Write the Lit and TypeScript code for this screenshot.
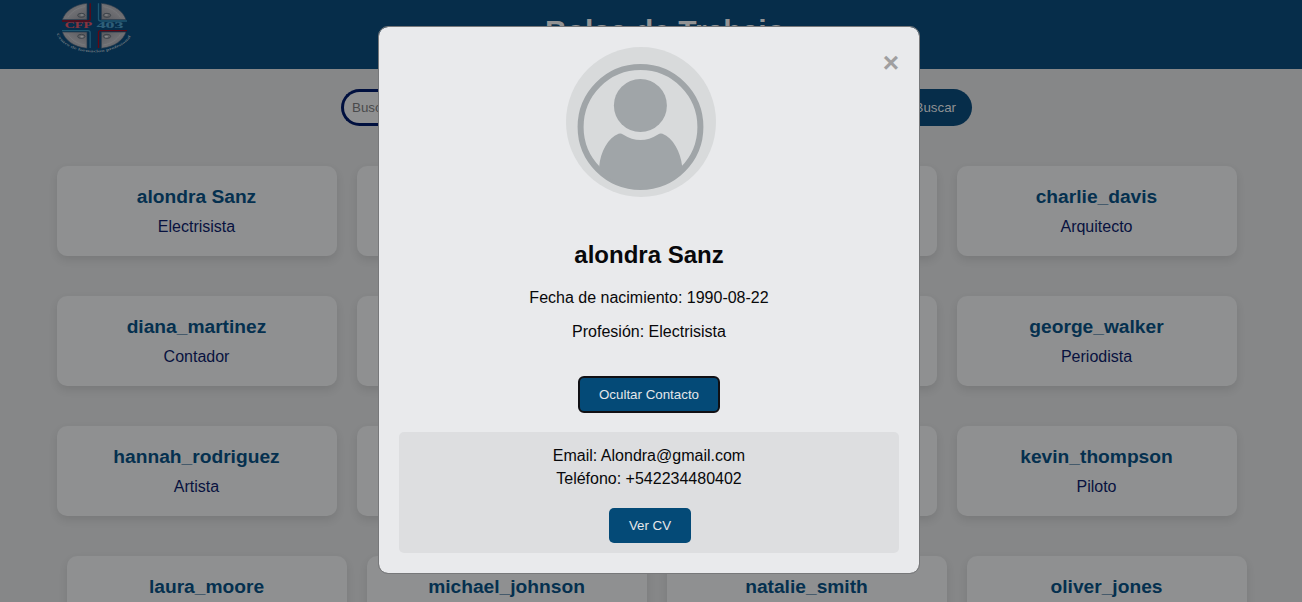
import { LitElement, html, svg, css } from "lit";
import { customElement, property } from "lit/decorators.js";

type Person = { name: string; job: string };

const shifted: Person[] = [
  { name: "alondra Sanz", job: "Electrisista" },
  { name: "", job: "" },
  { name: "", job: "" },
  { name: "charlie_davis", job: "Arquitecto" },
  { name: "diana_martinez", job: "Contador" },
  { name: "", job: "" },
  { name: "", job: "" },
  { name: "george_walker", job: "Periodista" },
  { name: "hannah_rodriguez", job: "Artista" },
  { name: "", job: "" },
  { name: "", job: "" },
  { name: "kevin_thompson", job: "Piloto" },
];

const rest: Person[] = [
  { name: "laura_moore", job: "" },
  { name: "michael_johnson", job: "" },
  { name: "natalie_smith", job: "" },
  { name: "oliver_jones", job: "" },
];

@customElement("school-logo")
export class SchoolLogo extends LitElement {
  static styles = css`
    :host { display: block; width: 78px; height: 54px; }
    svg { display: block; }
    .word { font: bold 23px "Liberation Serif", serif; stroke-width: 0.4; }
    .motto { font: bold 11px "Liberation Serif", serif; fill: #66737c; }
  `;
  render() {
    const wing = (t: string) => svg`
      <g transform=${t}>
        <path d="M-95 -19 C-87 -43 -62 -64 -21 -68 V-19 Z" fill="url(#metal)" stroke="#26384a" stroke-width="2"/>
        <path d="M-78 -26 C-67 -44 -50 -54 -27 -58" fill="none" stroke="#77787b" stroke-width="3"/>
        <ellipse cx="-38" cy="-32" rx="11" ry="6" fill="#5f6064" stroke="#3d444b" stroke-width="3"/>
        <ellipse cx="-36" cy="-33" rx="5" ry="2.5" fill="#868789"/>
      </g>`;
    return html`<svg width="78" height="54" viewBox="45 0 234 162">
      <defs>
        <linearGradient id="metal" x1="0" y1="0" x2="1" y2="1">
          <stop offset="0" stop-color="#5a5c60"/><stop offset=".5" stop-color="#6f6f73"/><stop offset="1" stop-color="#58595e"/>
        </linearGradient>
        <path id="arc" d="M50 101 C76 176 250 176 277 98"/>
      </defs>
      ${wing("translate(162 78)")}
      ${wing("translate(163 78) scale(-1 1)")}
      ${wing("translate(162 77) scale(1 -1)")}
      ${wing("translate(163 77) scale(-1 -1)")}
      <g fill="none" stroke-width="4">
        <path d="M150.5 10 V57 Q150.5 63 144 63 H66" stroke="#620713"/>
        <path d="M175.5 10 V57 Q175.5 63 182 63 H261" stroke="#1f5670"/>
        <path d="M66 92 H144 Q150.5 92 150.5 98 V144" stroke="#1f5670"/>
        <path d="M261 92 H182 Q175.5 92 175.5 98 V144" stroke="#620713"/>
      </g>
      <text class="word" x="74" y="85" textLength="82" lengthAdjust="spacingAndGlyphs" fill="#8a343e" stroke="#8a343e">CFP</text>
      <text class="word" x="170" y="85" textLength="80" lengthAdjust="spacingAndGlyphs" fill="#2f5f79" stroke="#2f5f79">403</text>
      <text class="motto"><textPath href="#arc" textLength="258" lengthAdjust="spacingAndGlyphs">Centro de formacion profesional</textPath></text>
    </svg>`;
  }
}

@customElement("person-card")
export class PersonCard extends LitElement {
  @property() name = "";
  @property() job = "";
  static styles = css`
    :host {
      display: block; box-sizing: border-box; width: 280px; height: 90px; padding: 20px;
      border-radius: 10px; background: #8f9091; text-align: center;
      box-shadow: 0 4px 8px rgba(0, 0, 0, 0.1);
    }
    .name { margin: 0; font-size: 19.2px; line-height: 22px; height: 22px; font-weight: bold; color: #05304f; }
    .job { margin: 10px 0 0; font-size: 16px; line-height: 18px; color: #08123f; }
  `;
  render() {
    return html`<h3 class="name">${this.name}</h3><p class="job">${this.job}</p>`;
  }
}

@customElement("contact-modal")
export class ContactModal extends LitElement {
  static styles = css`
    :host {
      position: absolute; inset: 0; display: flex; justify-content: center;
      align-items: flex-start; padding: 26px 4px 0 0; z-index: 2;
    }
    .dialog {
      box-sizing: border-box; width: 542px; height: 548px; padding: 20px;
      border: 1px solid #77787a; border-radius: 10px; background: #e9eaec;
      background-clip: padding-box; text-align: center; color: #08080a; font-size: 16px;
    }
    .top { display: flex; height: 150px; }
    .picture { flex: 1; display: flex; justify-content: center; }
    .close { font-size: 28px; line-height: 32px; font-weight: bold; color: #a09fa0; }
    h2 { margin: 44px 0 0; font-size: 24px; line-height: 28px; }
    .line { margin: 0; line-height: 18px; }
    .birth { margin-top: 20px; }
    .work { margin-top: 16px; }
    button {
      display: block; margin: 0 auto; height: 35px; padding: 0 20px; border: 0; border-radius: 5px;
      background: #044a77; color: #e4e7ea; font: 13.333px "Liberation Sans", Arial, sans-serif;
    }
    .toggle { margin-top: 36px; outline: 2px solid #101014; outline-offset: -1px; }
    .contact {
      box-sizing: border-box; height: 121px; margin-top: 20px; padding: 12px 10px 10px;
      border-radius: 5px; background: #dddee0; line-height: 23px;
    }
    .contact p { margin: 0; }
    .actions { padding: 18px 0 0 2px; }
    .actions button { width: 82px; padding: 0; }
  `;
  render() {
    return html`<section class="dialog" role="dialog">
      <div class="top">
        <div class="picture">
          <svg width="150" height="150" viewBox="0 0 150 150">
            <circle cx="75" cy="75" r="75" fill="#d8dadb"/>
            <circle cx="74.5" cy="80" r="59.9" fill="none" stroke="#a0a5a8" stroke-width="6"/>
            <circle cx="74.4" cy="58.5" r="26.5" fill="#a0a5a8"/>
            <path fill="#a0a5a8" d="M33.2 119.5 C34.5 105 42 91 52.5 86.8 Q54.8 85.8 57 87.4 Q74.5 98.5 92 87.4 Q94.2 85.8 96.5 86.8 C107 91 114.6 105 116.2 119.5 C105 146 44 146 33.2 119.5Z"/>
          </svg>
        </div>
        <span class="close">×</span>
      </div>
      <h2>alondra Sanz</h2>
      <p class="line birth">Fecha de nacimiento: 1990-08-22</p>
      <p class="line work">Profesión: Electrisista</p>
      <button class="toggle">Ocultar Contacto</button>
      <div class="contact">
        <p>Email: Alondra@gmail.com</p>
        <p>Teléfono: +542234480402</p>
        <div class="actions"><button>Ver CV</button></div>
      </div>
    </section>`;
  }
}

@customElement("app-root")
export class AppRoot extends LitElement {
  static styles = css`
    :host {
      display: block; position: relative; height: 602px; overflow: hidden; background: #868788;
      font-family: "Liberation Sans", Arial, sans-serif;
    }
    header {
      display: grid; grid-template-columns: 78px 1fr 78px; height: 69px; padding: 0 27px 0 55px;
      background: #062d4a;
    }
    h1 { margin: 13px 0 0; text-align: center; font-size: 30px; line-height: 36px; color: #929394; }
    .search { display: flex; width: 631px; height: 37px; margin: 20px 0 0 341px; }
    .field {
      box-sizing: border-box; flex: 1; border: 3px solid #00103f; border-right: 0;
      border-radius: 19px 0 0 19px; padding: 0 8px; background: #8f9091; color: #494a4c;
      font-size: 13.333px; line-height: 31px;
    }
    .go {
      border: 0; border-radius: 0 19px 19px 0; background: #062d4a; color: #8f9193;
      padding: 0 16px; font: 13.333px "Liberation Sans", Arial, sans-serif;
    }
    .grid { display: grid; grid-template-columns: repeat(4, 280px); gap: 40px 20px; margin: 40px 0 0 56.5px; }
    .more { margin-left: 66.5px; }
  `;
  render() {
    const card = (p: Person) => html`<person-card .name=${p.name} .job=${p.job}></person-card>`;
    return html`
      <header><school-logo></school-logo><h1>Bolsa de Trabajo</h1></header>
      <div class="search"><div class="field">Buscar</div><button class="go">Buscar</button></div>
      <main>
        <div class="grid">${shifted.map(card)}</div>
        <div class="grid more">${rest.map(card)}</div>
      </main>
      <contact-modal></contact-modal>`;
  }
}
